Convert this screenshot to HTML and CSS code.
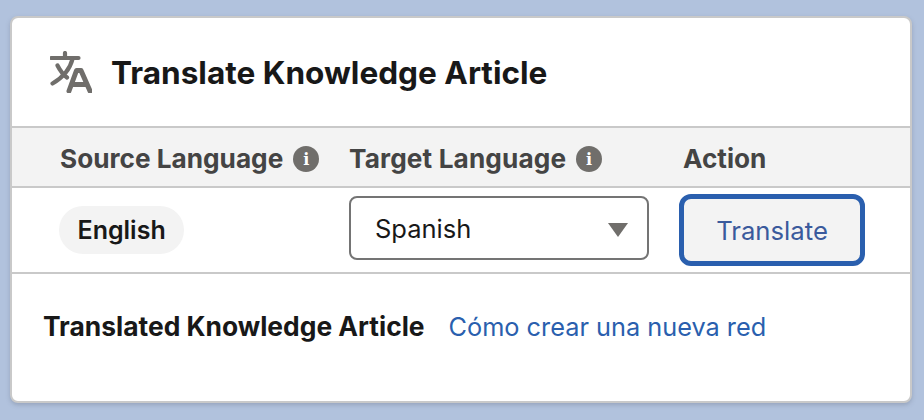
FILE: index.html
```html
<!DOCTYPE html>
<html lang="en">
<head>
<meta charset="utf-8">
<title>Translate Knowledge Article</title>
<link rel="stylesheet" href="styles.css">
</head>
<body>
<main class="card">
  <header class="card-header">
    <svg class="translate-icon" viewBox="0 0 42 42" aria-hidden="true">
      <path class="icon-stroke" d="M1.500 7H28.500M15 2V7M22.500 8C20 18 12 27 2.500 32.500M7.500 14.500C10 19.500 13 23.500 17 26.500"/>
      <path class="icon-stroke icon-a" d="M19 40L26.500 19.500H31L40 40M22.500 33.500H36.500"/>
    </svg>
    <h1 class="card-title">Translate Knowledge Article</h1>
  </header>
  <div class="table-head">
    <div class="col-source head-cell">Source Language <span class="info">i</span></div>
    <div class="col-target head-cell">Target Language <span class="info">i</span></div>
    <div class="col-action head-cell">Action</div>
  </div>
  <div class="table-row">
    <div class="col-source"><span class="pill">English</span></div>
    <div class="col-target">
      <div class="select"><span>Spanish</span><span class="caret"></span></div>
    </div>
    <div class="col-action"><button class="button" type="button">Translate</button></div>
  </div>
  <section class="result">
    <strong class="result-label">Translated Knowledge Article</strong>
    <a class="result-link" href="#">Cómo crear una nueva red</a>
  </section>
</main>
</body>
</html>
```
FILE: styles.css
```css
* { box-sizing: border-box; }
html, body { margin: 0; height: 420px; overflow: hidden; }
body {
  background: #b1c2dd;
  font-family: Inter, "Liberation Sans", sans-serif;
  padding: 16px 12px 17px 10px;
}
.card {
  height: 387px;
  background: #fff;
  border: 2px solid #c9c9c9;
  border-radius: 8px;
  box-shadow: 0 2px 4px rgba(100, 110, 130, .35);
  display: flex;
  flex-direction: column;
}
.card-header {
  height: 110px;
  display: flex;
  align-items: center;
  padding: 0 0 0 38px;
  border-bottom: 2px solid #c9c9c9;
  flex: none;
}
.translate-icon { width: 42px; height: 42px; flex: none; margin-right: 19px; }
.icon-stroke { fill: none; stroke: #706e6b; stroke-width: 4.200; stroke-linecap: round; stroke-linejoin: round; }
.icon-a { stroke-width: 5; }
.card-title { margin: 0; font-size: 31.570px; font-weight: 700; color: #181818; }
.table-head, .table-row {
  display: grid;
  grid-template-columns: 337px 334px 1fr;
  flex: none;
}
.table-head {
  height: 60px;
  background: #f3f3f3;
  border-bottom: 2px solid #c9c9c9;
  align-items: center;
}
.table-head > .col-source { padding-left: 48px; }
.head-cell {
  display: flex;
  align-items: center;
  gap: 10px;
  padding-top: 2px;
  font-size: 26.200px;
  font-weight: 700;
  color: #444;
}
.head-cell.col-target { letter-spacing: .13px; }
.info {
  width: 26px;
  height: 26px;
  margin-top: 2px;
  border-radius: 50%;
  background: #706e6b;
  color: #fff;
  font-size: 16px;
  font-weight: 800;
  display: flex;
  align-items: center;
  justify-content: center;
  font-family: "DejaVu Serif", serif;
}
.table-row {
  height: 86px;
  border-bottom: 2px solid #c9c9c9;
  align-items: center;
}
.table-row > .col-source { padding-left: 47px; }
.pill {
  display: inline-block;
  background: #f3f3f3;
  border-radius: 24px;
  padding: 0 18.500px;
  line-height: 48px;
  font-size: 25px;
  font-weight: 600;
  color: #181818;
}
.select {
  width: 300px;
  height: 64px;
  margin-bottom: 4px;
  border: 2px solid #747474;
  border-radius: 8px;
  display: flex;
  align-items: center;
  justify-content: space-between;
  padding: 0 19px 0 24px;
  font-size: 25.500px;
  color: #181818;
  background: #fff;
}
.caret {
  width: 0;
  height: 0;
  margin-top: 3px;
  border-left: 10px solid transparent;
  border-right: 10px solid transparent;
  border-top: 14px solid #706e6b;
}
.button {
  width: 186px;
  height: 72px;
  margin-left: -4px;
  background: #f3f3f3;
  border: 5px solid #2a5fae;
  border-radius: 12px;
  color: #3a5a9c;
  font: 400 25.700px Inter, "Liberation Sans", sans-serif;
}
.result {
  display: flex;
  align-items: center;
  gap: 24px;
  padding: 36px 0 0 31px;
  font-size: 26.400px;
}
.result-label { font-weight: 700; color: #181818; }
.result-link { color: #2a5fae; text-decoration: none; font-size: 25.300px; }
```
